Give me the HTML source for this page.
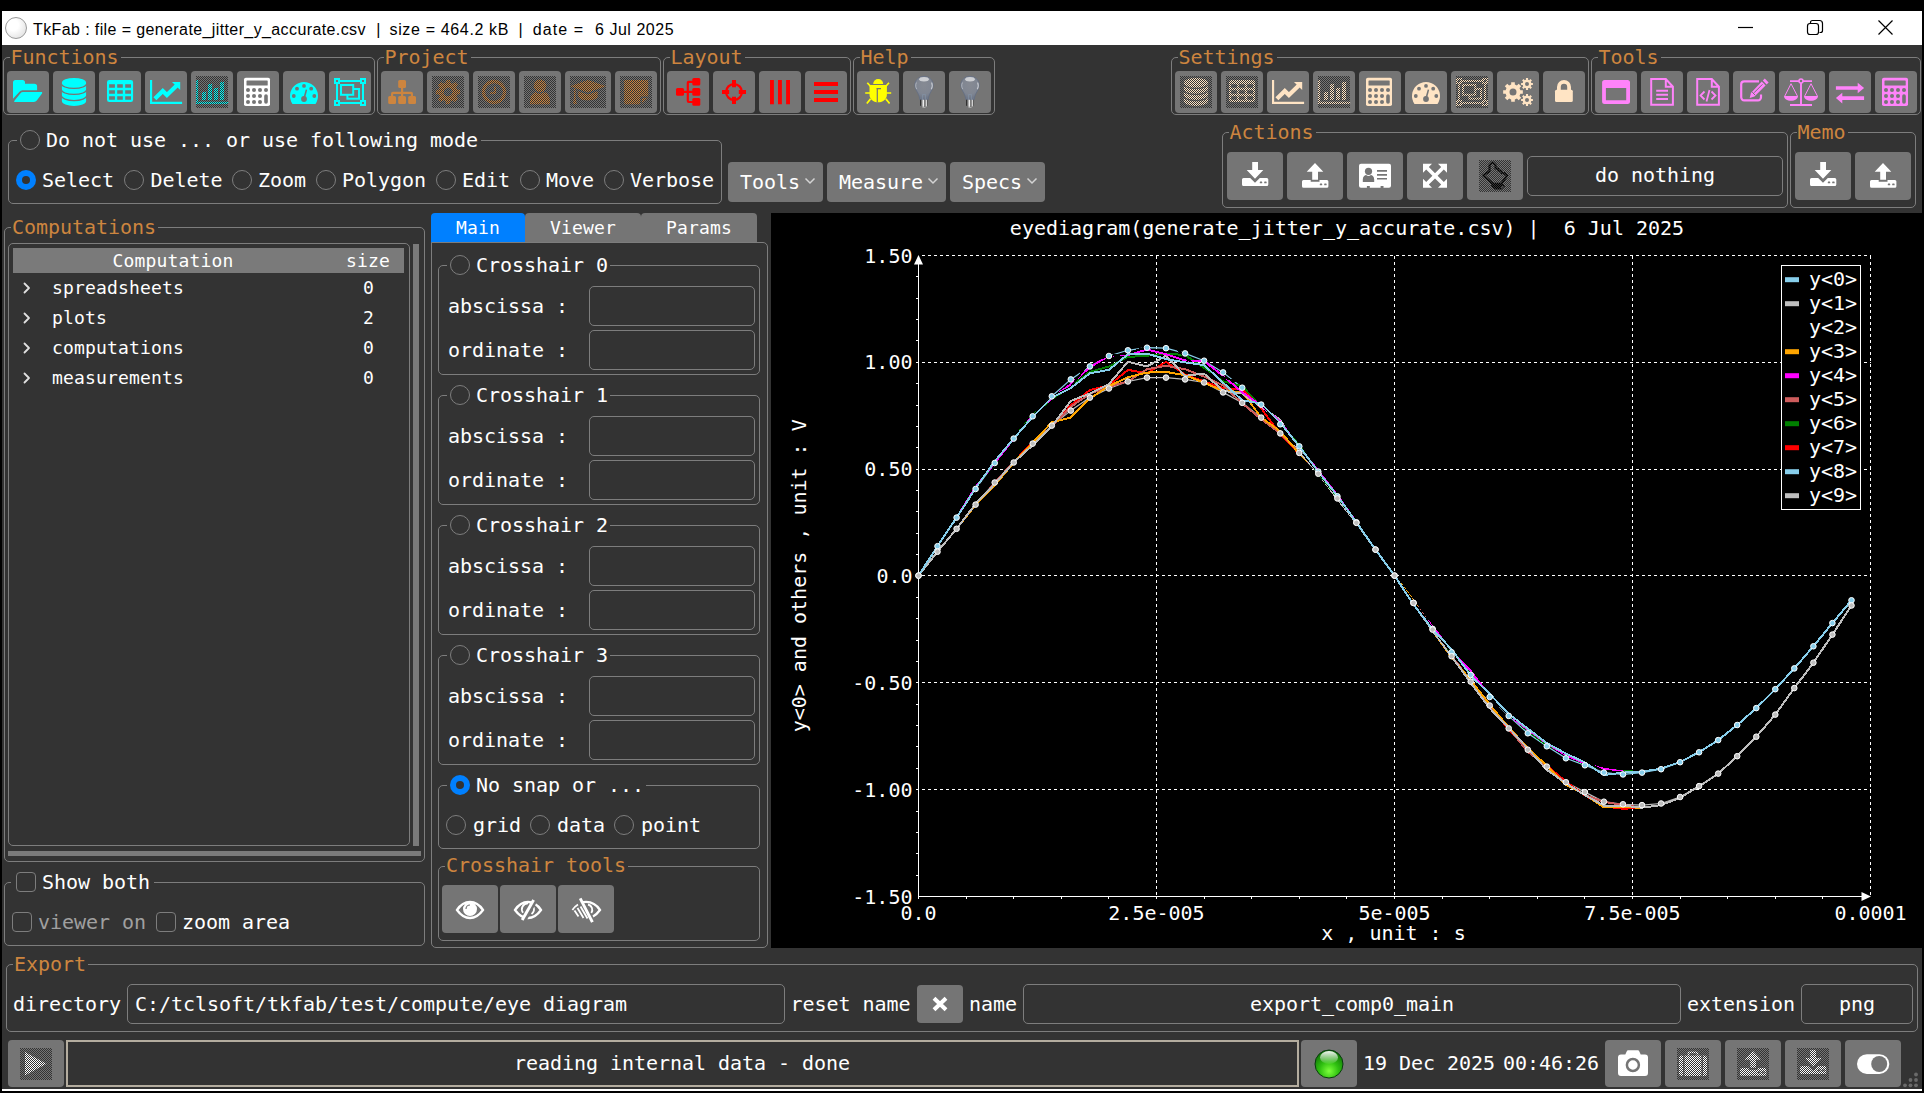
<!DOCTYPE html>
<html lang="en"><head><meta charset="utf-8"><title>TkFab</title>
<style>
html,body{margin:0;padding:0;background:#000;}
#root{position:relative;width:1924px;height:1093px;overflow:hidden;font-family:"DejaVu Sans Mono","Liberation Mono",monospace;}
.p,.t,.f,.b,.st{position:absolute;}
.t{white-space:pre;}
.f{box-sizing:border-box;border:1px solid #7d7d7d;border-radius:5px;}
.b{background:#757575;overflow:hidden;}
.st{background:repeating-conic-gradient(transparent 0 25%,#333333 0 50%) 0 0/2px 2px;}
.ttl{font-family:"Liberation Sans","DejaVu Sans",sans-serif;font-size:16px;line-height:22px;color:#000;white-space:pre;letter-spacing:0.5px}
svg{display:block;overflow:visible}
</style></head>
<body><div id="root">
<div class="p" style="left:0;top:0;width:1924px;height:1093px;background:#000"></div>
<div class="p" style="left:2px;top:11px;width:1920px;height:1080px;background:#fff"></div>
<div class="p" style="left:2px;top:45px;width:1920px;height:1044px;background:#333333"></div>
<div class="p" style="left:5px;top:17px;width:22px;height:22px;border-radius:50%;box-sizing:border-box;border:1px solid #9a9a9a;background:radial-gradient(circle at 35% 35%,#fff 30%,#d8d8d8 100%)"></div>
<div class="p ttl" style="left:33px;top:18.5px;letter-spacing:0.39px">TkFab : file = generate_jitter_y_accurate.csv</div>
<div class="p ttl" style="left:376.3px;top:18.5px;letter-spacing:0px">|</div>
<div class="p ttl" style="left:389.5px;top:18.5px;letter-spacing:0.65px">size = 464.2 kB</div>
<div class="p ttl" style="left:518.5px;top:18.5px;letter-spacing:0px">|</div>
<div class="p ttl" style="left:532.7px;top:18.5px;letter-spacing:1.1px">date =</div>
<div class="p ttl" style="left:595px;top:18.5px;letter-spacing:0.53px">6 Jul 2025</div>
<svg class="p" style="left:1730px;top:11px" width="192" height="34" viewBox="0 0 192 34"><g fill="none" stroke="#000" stroke-width="1.2"><path d="M8 16.5h15"/><rect x="77.5" y="12.5" width="11" height="11" rx="2.5"/><path d="M80.5 12.5v-1a2 2 0 0 1 2-2h7a3 3 0 0 1 3 3v7a2 2 0 0 1-2 2h-1"/><path d="M148.5 9.5l14 14m0-14l-14 14"/></g></svg>
<div class="b" style="left:7px;top:71px;width:42px;height:42px;border-radius:4px"><svg class="p" style="left:5.0px;top:5.0px" width="32" height="32" viewBox="0 0 32 32"><g fill="#00ffff"><path d="M1 6.400a2.500 2.500 0 0 1 2.500-2.500h7a2.500 2.500 0 0 1 2.500 2.500v1.400h9.300a2.800 2.800 0 0 1 2.800 2.800v3.700H10.400a3.600 3.600 0 0 0-2.900 1.500L1 22.800z"/><path d="M11.300 16h18c.9 0 1.200.7.700 1.400l-5.200 7.200a3.600 3.600 0 0 1-2.900 1.500H3.100c-.9 0-1.200-.7-.7-1.400l5.900-7.300a3.600 3.600 0 0 1 3-1.400z"/></g></svg></div>
<div class="b" style="left:53px;top:71px;width:42px;height:42px;border-radius:4px"><svg class="p" style="left:5.0px;top:5.0px" width="32" height="32" viewBox="0 0 32 32"><g fill="#00ffff"><path d="M3.9 6.9h24.2v18.100h-24.2z"/><ellipse cx="16" cy="6.9" rx="12.100" ry="5"/><ellipse cx="16" cy="25" rx="12.100" ry="5"/></g><g fill="none" stroke="#757575" stroke-width="1.25"><path d="M3.3 7.500A12.7 5 0 0 0 28.700 7.500M3.3 13.45A12.7 5 0 0 0 28.700 13.45M3.3 19.55A12.7 5 0 0 0 28.700 19.55"/></g></svg></div>
<div class="b" style="left:99px;top:71px;width:42px;height:42px;border-radius:4px"><svg class="p" style="left:5.0px;top:5.0px" width="32" height="32" viewBox="0 0 32 32"><path fill="#00ffff" fill-rule="evenodd" d="M5.300 3.900h21.5a2.3 2.3 0 0 1 2.3 2.3v17.600a2.3 2.3 0 0 1-2.3 2.3H5.300a2.3 2.3 0 0 1-2.3-2.3V6.200a2.3 2.3 0 0 1 2.3-2.3z M5.15 8.2h5.75v3.6h-5.75z M13.2 8.2h5.6v3.6h-5.6z M21.2 8.2h5.8v3.6h-5.8z M5.15 14.2h5.75v3.5h-5.75z M13.2 14.2h5.6v3.5h-5.6z M21.2 14.2h5.8v3.5h-5.8z M5.15 20.2h5.75v3.6h-5.75z M13.2 20.2h5.6v3.6h-5.6z M21.2 20.2h5.8v3.6h-5.8z"/></svg></div>
<div class="b" style="left:145px;top:71px;width:42px;height:42px;border-radius:4px"><svg class="p" style="left:5.0px;top:5.0px" width="32" height="32" viewBox="0 0 32 32"><g fill="#00ffff"><path d="M0 3.900h2.150v21.800H32.100v2.200H0z"/><path d="M21.950 6H30.200V14z"/></g><path d="M4.900 22.850L12.800 15l4.100 4L26.500 9.700" fill="none" stroke="#00ffff" stroke-width="4.200"/></svg></div>
<div class="b" style="left:191px;top:71px;width:42px;height:42px;border-radius:4px"><svg class="p" style="left:5.0px;top:5.0px" width="32" height="32" viewBox="0 0 32 32"><g fill="#00ffff"><path d="M0 3.900h2.150v21.800H32.100v2.200H0z"/><path d="M6 16h4v8H6zM12 8h4v16h-4zM18 12h4v12h-4zM24 6h4v18h-4z"/></g></svg><div class="st" style="left:5.0px;top:5.0px;width:32px;height:32px"></div></div>
<div class="b" style="left:237px;top:71px;width:42px;height:42px;border-radius:4px"><svg class="p" style="left:5.0px;top:5.0px" width="32" height="32" viewBox="0 0 32 32"><rect x="2" y="1.800" width="26" height="28.200" rx="1.800" fill="#fff"/><g fill="#757575"><rect x="4.500" y="4.500" width="21.200" height="5" rx=".6"/><circle cx="6" cy="14" r="2"/><circle cx="12" cy="14" r="2"/><circle cx="18" cy="14" r="2"/><circle cx="24" cy="14" r="2"/><circle cx="6" cy="20" r="2"/><circle cx="12" cy="20" r="2"/><circle cx="18" cy="20" r="2"/><circle cx="6" cy="26" r="2"/><circle cx="12" cy="26" r="2"/><circle cx="18" cy="26" r="2"/><rect x="22.200" y="18.200" width="3.600" height="9.600" rx="1.800"/></g></svg></div>
<div class="b" style="left:283px;top:71px;width:42px;height:42px;border-radius:4px"><svg class="p" style="left:5.0px;top:5.0px" width="32" height="32" viewBox="0 0 32 32"><path fill="#00ffff" d="M4.500 28A14 14 0 1 1 27.500 28z"/><g fill="#757575"><circle cx="5.800" cy="20" r="1.900"/><circle cx="9" cy="12.700" r="1.900"/><circle cx="16" cy="9.900" r="1.900"/><circle cx="23.200" cy="12.700" r="1.900"/><circle cx="26.300" cy="20" r="1.900"/><circle cx="16" cy="23" r="2.900"/><path d="M15.200 22.600l2.500-9.200 1.500.4-2.400 9.200z"/></g></svg></div>
<div class="b" style="left:329px;top:71px;width:42px;height:42px;border-radius:4px"><svg class="p" style="left:5.0px;top:5.0px" width="32" height="32" viewBox="0 0 32 32"><g fill="none" stroke="#00ffff" stroke-width="2"><path d="M3 5v22M29 5v22M3 5h26M3 27h26" /><rect x="13.400" y="13" width="11.600" height="9.700"/></g><rect x="7" y="9" width="12.200" height="9.800" fill="#757575" stroke="#00ffff" stroke-width="2"/><g fill="#757575" stroke="#00ffff" stroke-width="2"><rect x="1" y="3" width="4" height="4"/><rect x="27" y="3" width="4" height="4"/><rect x="1" y="25" width="4" height="4"/><rect x="27" y="25" width="4" height="4"/></g></svg></div>
<div class="f" style="left:3px;top:57px;width:372px;height:58px;"></div>
<div class="p" style="left:9.5px;top:48px;width:111.0px;height:22px;background:#333333"></div>
<div class="t" style="top:45.08px;font-size:20px;line-height:24px;color:#cd853f;letter-spacing:-0.040px;left:10.5px;">Functions</div>
<div class="b" style="left:381px;top:71px;width:42px;height:42px;border-radius:4px"><svg class="p" style="left:5.0px;top:5.0px" width="32" height="32" viewBox="0 0 32 32"><g fill="#cd853f"><rect x="12.200" y="4" width="7.800" height="8" rx="1.500"/><rect x="2.200" y="20" width="7.800" height="8" rx="1.500"/><rect x="12.200" y="20" width="7.800" height="8" rx="1.500"/><rect x="22.200" y="20" width="7.800" height="8" rx="1.500"/><path d="M15 11h2.200v4.800H25a2 2 0 0 1 2 2V21h-2.200v-3H17.200v3H15v-3H7.200v3H5v-3.200a2 2 0 0 1 2-2h8z"/></g></svg></div>
<div class="b" style="left:427px;top:71px;width:42px;height:42px;border-radius:4px"><svg class="p" style="left:5.0px;top:5.0px" width="32" height="32" viewBox="0 0 32 32"><g fill="#cd853f"><path fill-rule="evenodd" d="M25.32 13.69 L28.10 13.79 L28.10 18.21 L25.32 18.31 L24.22 20.95 L26.12 22.99 L22.99 26.12 L20.95 24.22 L18.31 25.32 L18.21 28.10 L13.79 28.10 L13.69 25.32 L11.05 24.22 L9.01 26.12 L5.88 22.99 L7.78 20.95 L6.68 18.31 L3.90 18.21 L3.90 13.79 L6.68 13.69 L7.78 11.05 L5.88 9.01 L9.01 5.88 L11.05 7.78 L13.69 6.68 L13.79 3.90 L18.21 3.90 L18.31 6.68 L20.95 7.78 L22.99 5.88 L26.12 9.01 L24.22 11.05Z M20.30 16.00 a4.3 4.3 0 1 0 -8.60 0 a4.3 4.3 0 1 0 8.60 0Z"/></g></svg><div class="st" style="left:5.0px;top:5.0px;width:32px;height:32px"></div></div>
<div class="b" style="left:473px;top:71px;width:42px;height:42px;border-radius:4px"><svg class="p" style="left:5.0px;top:5.0px" width="32" height="32" viewBox="0 0 32 32"><g fill="none" stroke="#cd853f"><circle cx="16" cy="16" r="10.500" stroke-width="3.300"/><path d="M17 10.500v6.500h-4.800" stroke-width="2"/></g></svg><div class="st" style="left:5.0px;top:5.0px;width:32px;height:32px"></div></div>
<div class="b" style="left:519px;top:71px;width:42px;height:42px;border-radius:4px"><svg class="p" style="left:5.0px;top:5.0px" width="32" height="32" viewBox="0 0 32 32"><g fill="#cd853f"><circle cx="16" cy="9.700" r="6.300"/><path d="M6 28.200c-.5-7 2-11.500 6-12.300 1 1 2.500 1.600 4 1.600s3-.6 4-1.600c4 .8 6.500 5.300 6 12.300z"/></g></svg><div class="st" style="left:5.0px;top:5.0px;width:32px;height:32px"></div></div>
<div class="b" style="left:565px;top:71px;width:46px;height:42px;border-radius:4px"><svg class="p" style="left:5.0px;top:5.0px" width="36" height="32" viewBox="0 0 36 32"><g fill="#cd853f"><path d="M18 4L36 10.300 18 16.600 0 10.300z"/><path d="M8.300 15.200L18 18.600l9.700-3.400v5c0 2.300-4.300 4.100-9.700 4.100s-9.700-1.800-9.700-4.100z"/><path d="M4 12.500h1.600v9l1 6.500H3l1-6.500z"/></g></svg><div class="st" style="left:5.0px;top:5.0px;width:36px;height:32px"></div></div>
<div class="b" style="left:615px;top:71px;width:42px;height:42px;border-radius:4px"><svg class="p" style="left:5.0px;top:5.0px" width="32" height="32" viewBox="0 0 32 32"><g fill="#cd853f"><path d="M5.500 4h21.300a1.400 1.400 0 0 1 1.400 1.400V20.500h-6.500a1.400 1.400 0 0 0-1.400 1.400v6.300H5.500a1.400 1.400 0 0 1-1.400-1.400V5.400A1.400 1.400 0 0 1 5.500 4z"/><path d="M22 22h5.800l-5.800 5.800z"/></g></svg><div class="st" style="left:5.0px;top:5.0px;width:32px;height:32px"></div></div>
<div class="f" style="left:377px;top:57px;width:284px;height:58px;"></div>
<div class="p" style="left:383.5px;top:48px;width:87.0px;height:22px;background:#333333"></div>
<div class="t" style="top:45.08px;font-size:20px;line-height:24px;color:#cd853f;letter-spacing:-0.040px;left:384.5px;">Project</div>
<div class="b" style="left:667px;top:71px;width:42px;height:42px;border-radius:4px"><svg class="p" style="left:5.0px;top:5.0px" width="32" height="32" viewBox="0 0 32 32"><g fill="#ff0000"><rect x="4" y="12" width="8" height="7.800" rx="1.500"/><rect x="20.300" y="2" width="8" height="7.600" rx="1.500"/><rect x="20.300" y="12" width="8" height="7.800" rx="1.500"/><rect x="20.300" y="22.100" width="8" height="7.600" rx="1.500"/><path d="M11 14.800h3.700V6.700a2 2 0 0 1 2-2H21v2.200h-4.100v7.900H21V17h-4.100v7.900H21v2.200h-4.300a2 2 0 0 1-2-2V17H11z"/></g></svg></div>
<div class="b" style="left:713px;top:71px;width:42px;height:42px;border-radius:4px"><svg class="p" style="left:5.0px;top:5.0px" width="32" height="32" viewBox="0 0 32 32"><g fill="none" stroke="#ff0000"><circle cx="16" cy="16" r="7.900" stroke-width="2.300"/><path d="M4 16h7.200M20.800 16H28M16 4v7.200M16 20.800V28" stroke-width="4"/></g></svg></div>
<div class="b" style="left:759px;top:71px;width:42px;height:42px;border-radius:4px"><svg class="p" style="left:5.0px;top:5.0px" width="32" height="32" viewBox="0 0 32 32"><path fill="#ff0000" d="M6 4h3.900v24.200H6zM14 4h3.900v24.200H14zM22.100 4H26v24.200h-3.900z"/></svg></div>
<div class="b" style="left:805px;top:71px;width:42px;height:42px;border-radius:4px"><svg class="p" style="left:5.0px;top:5.0px" width="32" height="32" viewBox="0 0 32 32"><path fill="#ff0000" d="M4 6h24v4H4zM4 13.900h24v4.100H4zM4 22h24v4H4z"/></svg></div>
<div class="f" style="left:663px;top:57px;width:188px;height:58px;"></div>
<div class="p" style="left:669.5px;top:48px;width:75.0px;height:22px;background:#333333"></div>
<div class="t" style="top:45.08px;font-size:20px;line-height:24px;color:#cd853f;letter-spacing:-0.040px;left:670.5px;">Layout</div>
<div class="b" style="left:857px;top:71px;width:42px;height:42px;border-radius:4px"><svg class="p" style="left:5.0px;top:5.0px" width="32" height="32" viewBox="0 0 32 32"><g fill="#ffff00"><path d="M11.200 8a5 5 0 0 1 10 0z"/><path d="M7.500 9h17.400v9.500c0 4.500-3.500 7.800-8.700 7.800s-8.700-3.300-8.700-7.800z"/></g><g stroke="#ffff00" stroke-width="1.700" fill="none"><path d="M5.300 6.800l3.800 4.200M3.200 17h5M4.800 27.500l3.800-4.600M27 6.800l-3.800 4.200M29.200 17h-5M27.600 27.500l-3.800-4.600"/></g><path d="M14.700 12h1.200v14.500h-1.200z" fill="#757575"/><path d="M14.700 12h4.300v1.200h-4.300z" fill="#757575"/></svg></div>
<div class="b" style="left:903px;top:71px;width:42px;height:42px;border-radius:4px"><svg class="p" style="left:5.0px;top:5.0px" width="32" height="32" viewBox="0 0 32 32"><defs><radialGradient id="bg1" cx=".5" cy=".35" r=".6"><stop offset="0" stop-color="#868a93"/><stop offset=".7" stop-color="#808692"/><stop offset="1" stop-color="#6f7889"/></radialGradient><linearGradient id="bg2" x1="0" x2="1"><stop offset="0" stop-color="#111"/><stop offset=".45" stop-color="#f4f4f4"/><stop offset=".6" stop-color="#555"/><stop offset=".8" stop-color="#ddd"/><stop offset="1" stop-color="#222"/></linearGradient></defs><path d="M16 0.300c5.200 0 9.200 3.900 9.200 8.800 0 3.500-1.900 5.800-3.200 8.400-1 2-1.600 3.800-1.800 6.200h-8.400c-.2-2.400-.8-4.200-1.800-6.200-1.300-2.600-3.200-4.900-3.200-8.400 0-4.900 4-8.800 9.200-8.800z" fill="url(#bg1)" stroke="#626d84" stroke-width=".7"/><ellipse cx="16" cy="3.200" rx="4.800" ry="2.200" fill="#fff" opacity=".6"/><path d="M23.600 6.500c1.200 2.600.7 5-.3 6.700" stroke="#fff" stroke-width="1.200" fill="none" opacity=".55"/><path d="M8.400 6.500c-1.200 2.600-.7 5 .3 6.700" stroke="#fff" stroke-width="1" fill="none" opacity=".4"/><path d="M14.500 24v-5.500h3V24" stroke="#8393a8" stroke-width=".6" fill="none"/><path d="M12 23.700h8v5.800l-2 1.300h-4l-2-1.300z" fill="url(#bg2)"/><path d="M14 31h4l-1 .8h-2z" fill="#bbb"/></svg></div>
<div class="b" style="left:949px;top:71px;width:42px;height:42px;border-radius:4px"><svg class="p" style="left:5.0px;top:5.0px" width="32" height="32" viewBox="0 0 32 32"><defs><radialGradient id="bg1" cx=".5" cy=".35" r=".6"><stop offset="0" stop-color="#868a93"/><stop offset=".7" stop-color="#808692"/><stop offset="1" stop-color="#6f7889"/></radialGradient><linearGradient id="bg2" x1="0" x2="1"><stop offset="0" stop-color="#111"/><stop offset=".45" stop-color="#f4f4f4"/><stop offset=".6" stop-color="#555"/><stop offset=".8" stop-color="#ddd"/><stop offset="1" stop-color="#222"/></linearGradient></defs><path d="M16 0.300c5.200 0 9.200 3.900 9.200 8.800 0 3.500-1.900 5.800-3.200 8.400-1 2-1.600 3.800-1.800 6.200h-8.400c-.2-2.400-.8-4.200-1.800-6.200-1.300-2.600-3.200-4.900-3.200-8.400 0-4.900 4-8.800 9.200-8.800z" fill="url(#bg1)" stroke="#626d84" stroke-width=".7"/><ellipse cx="16" cy="3.200" rx="4.800" ry="2.200" fill="#fff" opacity=".6"/><path d="M23.600 6.500c1.200 2.600.7 5-.3 6.700" stroke="#fff" stroke-width="1.200" fill="none" opacity=".55"/><path d="M8.400 6.500c-1.200 2.600-.7 5 .3 6.700" stroke="#fff" stroke-width="1" fill="none" opacity=".4"/><path d="M14.500 24v-5.500h3V24" stroke="#8393a8" stroke-width=".6" fill="none"/><path d="M12 23.700h8v5.800l-2 1.300h-4l-2-1.300z" fill="url(#bg2)"/><path d="M14 31h4l-1 .8h-2z" fill="#bbb"/></svg></div>
<div class="f" style="left:853px;top:57px;width:142px;height:58px;"></div>
<div class="p" style="left:859.5px;top:48px;width:51.0px;height:22px;background:#333333"></div>
<div class="t" style="top:45.08px;font-size:20px;line-height:24px;color:#cd853f;letter-spacing:-0.040px;left:860.5px;">Help</div>
<div class="b" style="left:1175px;top:71px;width:42px;height:42px;border-radius:4px"><svg class="p" style="left:5.0px;top:5.0px" width="32" height="32" viewBox="0 0 32 32"><g fill="#ffe4c4"><path d="M3.9 6.9h24.2v18.100h-24.2z"/><ellipse cx="16" cy="6.9" rx="12.100" ry="5"/><ellipse cx="16" cy="25" rx="12.100" ry="5"/></g><g fill="none" stroke="#757575" stroke-width="1.25"><path d="M3.3 7.500A12.7 5 0 0 0 28.700 7.500M3.3 13.45A12.7 5 0 0 0 28.700 13.45M3.3 19.55A12.7 5 0 0 0 28.700 19.55"/></g></svg><div class="st" style="left:5.0px;top:5.0px;width:32px;height:32px"></div></div>
<div class="b" style="left:1221px;top:71px;width:42px;height:42px;border-radius:4px"><svg class="p" style="left:5.0px;top:5.0px" width="32" height="32" viewBox="0 0 32 32"><path fill="#ffe4c4" fill-rule="evenodd" d="M5.300 3.900h21.5a2.3 2.3 0 0 1 2.3 2.3v17.600a2.3 2.3 0 0 1-2.3 2.3H5.300a2.3 2.3 0 0 1-2.3-2.3V6.200a2.3 2.3 0 0 1 2.3-2.3z M5.15 8.2h5.75v3.6h-5.75z M13.2 8.2h5.6v3.6h-5.6z M21.2 8.2h5.8v3.6h-5.8z M5.15 14.2h5.75v3.5h-5.75z M13.2 14.2h5.6v3.5h-5.6z M21.2 14.2h5.8v3.5h-5.8z M5.15 20.2h5.75v3.6h-5.75z M13.2 20.2h5.6v3.6h-5.6z M21.2 20.2h5.8v3.6h-5.8z"/></svg><div class="st" style="left:5.0px;top:5.0px;width:32px;height:32px"></div></div>
<div class="b" style="left:1267px;top:71px;width:42px;height:42px;border-radius:4px"><svg class="p" style="left:5.0px;top:5.0px" width="32" height="32" viewBox="0 0 32 32"><g fill="#ffe4c4"><path d="M0 3.900h2.150v21.800H32.100v2.200H0z"/><path d="M21.950 6H30.200V14z"/></g><path d="M4.900 22.850L12.800 15l4.100 4L26.500 9.700" fill="none" stroke="#ffe4c4" stroke-width="4.200"/></svg></div>
<div class="b" style="left:1313px;top:71px;width:42px;height:42px;border-radius:4px"><svg class="p" style="left:5.0px;top:5.0px" width="32" height="32" viewBox="0 0 32 32"><g fill="#ffe4c4"><path d="M0 3.900h2.150v21.800H32.100v2.200H0z"/><path d="M6 16h4v8H6zM12 8h4v16h-4zM18 12h4v12h-4zM24 6h4v18h-4z"/></g></svg><div class="st" style="left:5.0px;top:5.0px;width:32px;height:32px"></div></div>
<div class="b" style="left:1359px;top:71px;width:42px;height:42px;border-radius:4px"><svg class="p" style="left:5.0px;top:5.0px" width="32" height="32" viewBox="0 0 32 32"><rect x="2" y="1.800" width="26" height="28.200" rx="1.800" fill="#ffe4c4"/><g fill="#757575"><rect x="4.500" y="4.500" width="21.200" height="5" rx=".6"/><circle cx="6" cy="14" r="2"/><circle cx="12" cy="14" r="2"/><circle cx="18" cy="14" r="2"/><circle cx="24" cy="14" r="2"/><circle cx="6" cy="20" r="2"/><circle cx="12" cy="20" r="2"/><circle cx="18" cy="20" r="2"/><circle cx="6" cy="26" r="2"/><circle cx="12" cy="26" r="2"/><circle cx="18" cy="26" r="2"/><rect x="22.200" y="18.200" width="3.600" height="9.600" rx="1.800"/></g></svg></div>
<div class="b" style="left:1405px;top:71px;width:42px;height:42px;border-radius:4px"><svg class="p" style="left:5.0px;top:5.0px" width="32" height="32" viewBox="0 0 32 32"><path fill="#ffe4c4" d="M4.500 28A14 14 0 1 1 27.500 28z"/><g fill="#757575"><circle cx="5.800" cy="20" r="1.900"/><circle cx="9" cy="12.700" r="1.900"/><circle cx="16" cy="9.900" r="1.900"/><circle cx="23.200" cy="12.700" r="1.900"/><circle cx="26.300" cy="20" r="1.900"/><circle cx="16" cy="23" r="2.900"/><path d="M15.200 22.600l2.500-9.200 1.500.4-2.400 9.200z"/></g></svg></div>
<div class="b" style="left:1451px;top:71px;width:42px;height:42px;border-radius:4px"><svg class="p" style="left:5.0px;top:5.0px" width="32" height="32" viewBox="0 0 32 32"><g fill="none" stroke="#ffe4c4" stroke-width="2"><path d="M3 5v22M29 5v22M3 5h26M3 27h26" /><rect x="13.400" y="13" width="11.600" height="9.700"/></g><rect x="7" y="9" width="12.200" height="9.800" fill="#757575" stroke="#ffe4c4" stroke-width="2"/><g fill="#757575" stroke="#ffe4c4" stroke-width="2"><rect x="1" y="3" width="4" height="4"/><rect x="27" y="3" width="4" height="4"/><rect x="1" y="25" width="4" height="4"/><rect x="27" y="25" width="4" height="4"/></g></svg><div class="st" style="left:5.0px;top:5.0px;width:32px;height:32px"></div></div>
<div class="b" style="left:1497px;top:71px;width:42px;height:42px;border-radius:4px"><svg class="p" style="left:5.0px;top:5.0px" width="32" height="32" viewBox="0 0 32 32"><g fill="#ffe4c4"><path fill-rule="evenodd" d="M18.38 14.17 L20.84 14.20 L20.84 17.80 L18.38 17.83 L17.51 19.92 L19.23 21.69 L16.69 24.23 L14.92 22.51 L12.83 23.38 L12.80 25.84 L9.20 25.84 L9.17 23.38 L7.08 22.51 L5.31 24.23 L2.77 21.69 L4.49 19.92 L3.62 17.83 L1.16 17.80 L1.16 14.20 L3.62 14.17 L4.49 12.08 L2.77 10.31 L5.31 7.77 L7.08 9.49 L9.17 8.62 L9.20 6.16 L12.80 6.16 L12.83 8.62 L14.92 9.49 L16.69 7.77 L19.23 10.31 L17.51 12.08Z M14.50 16.00 a3.5 3.5 0 1 0 -7.00 0 a3.5 3.5 0 1 0 7.00 0Z"/><path fill-rule="evenodd" d="M29.27 6.94 L30.90 6.92 L30.90 9.08 L29.27 9.06 L28.77 10.27 L29.94 11.41 L28.41 12.94 L27.27 11.77 L26.06 12.27 L26.08 13.90 L23.92 13.90 L23.94 12.27 L22.73 11.77 L21.59 12.94 L20.06 11.41 L21.23 10.27 L20.73 9.06 L19.10 9.08 L19.10 6.92 L20.73 6.94 L21.23 5.73 L20.06 4.59 L21.59 3.06 L22.73 4.23 L23.94 3.73 L23.92 2.10 L26.08 2.10 L26.06 3.73 L27.27 4.23 L28.41 3.06 L29.94 4.59 L28.77 5.73Z M27.00 8.00 a2 2 0 1 0 -4.00 0 a2 2 0 1 0 4.00 0Z"/><path fill-rule="evenodd" d="M29.27 22.94 L30.90 22.92 L30.90 25.08 L29.27 25.06 L28.77 26.27 L29.94 27.41 L28.41 28.94 L27.27 27.77 L26.06 28.27 L26.08 29.90 L23.92 29.90 L23.94 28.27 L22.73 27.77 L21.59 28.94 L20.06 27.41 L21.23 26.27 L20.73 25.06 L19.10 25.08 L19.10 22.92 L20.73 22.94 L21.23 21.73 L20.06 20.59 L21.59 19.06 L22.73 20.23 L23.94 19.73 L23.92 18.10 L26.08 18.10 L26.06 19.73 L27.27 20.23 L28.41 19.06 L29.94 20.59 L28.77 21.73Z M27.00 24.00 a2 2 0 1 0 -4.00 0 a2 2 0 1 0 4.00 0Z"/></g></svg></div>
<div class="b" style="left:1543px;top:71px;width:42px;height:42px;border-radius:4px"><svg class="p" style="left:5.0px;top:5.0px" width="32" height="32" viewBox="0 0 32 32"><g fill="#ffe4c4"><rect x="7" y="13.800" width="17.800" height="12.300" rx="1.500"/><path d="M9 14V11a7 7 0 0 1 14 0v3h-3.800V11a3.200 3.200 0 0 0-6.400 0v3z"/></g></svg></div>
<div class="f" style="left:1171px;top:57px;width:418px;height:58px;"></div>
<div class="p" style="left:1177.5px;top:48px;width:99.0px;height:22px;background:#333333"></div>
<div class="t" style="top:45.08px;font-size:20px;line-height:24px;color:#cd853f;letter-spacing:-0.040px;left:1178.5px;">Settings</div>
<div class="b" style="left:1595px;top:71px;width:42px;height:42px;border-radius:4px"><svg class="p" style="left:5.0px;top:5.0px" width="32" height="32" viewBox="0 0 32 32"><path fill="#ff83fa" fill-rule="evenodd" d="M4.600 4.100h22.900a2.500 2.500 0 0 1 2.500 2.500v18.800a2.500 2.500 0 0 1-2.500 2.500H4.600a2.500 2.500 0 0 1-2.500-2.500V6.600a2.500 2.500 0 0 1 2.500-2.500z M5.900 12h20.300v12.200H5.900z"/></svg></div>
<div class="b" style="left:1641px;top:71px;width:42px;height:42px;border-radius:4px"><svg class="p" style="left:5.0px;top:5.0px" width="32" height="32" viewBox="0 0 32 32"><path d="M5.200 3h14.600l7.100 7.700V28.700H5.200zM19.800 3v7.700h7.100" fill="none" stroke="#ff83fa" stroke-width="2" stroke-linejoin="miter"/><path d="M10.200 14.800H22M10.200 18.800H22M10.200 22.900H22" stroke="#ff83fa" stroke-width="2" fill="none"/></svg></div>
<div class="b" style="left:1687px;top:71px;width:42px;height:42px;border-radius:4px"><svg class="p" style="left:5.0px;top:5.0px" width="32" height="32" viewBox="0 0 32 32"><path d="M5.200 3h14.600l7.100 7.700V28.700H5.200zM19.800 3v7.700h7.100" fill="none" stroke="#ff83fa" stroke-width="2" stroke-linejoin="miter"/><path d="M12.500 15.500l-4 4 4 4M19.500 15.500l4 4-4 4M17.500 14l-3 11.500" stroke="#ff83fa" stroke-width="1.800" fill="none"/></svg></div>
<div class="b" style="left:1733px;top:71px;width:42px;height:42px;border-radius:4px"><svg class="p" style="left:5.0px;top:5.0px" width="32" height="32" viewBox="0 0 32 32"><path d="M21 5.300H6.200a3 3 0 0 0-3 3v13a3 3 0 0 0 3 3H20a3 3 0 0 0 3-3V18.500" fill="none" stroke="#ff83fa" stroke-width="2.200"/><g fill="#ff83fa"><path d="M24.800 4.600l2-2 3.800 3.800-2 2z"/><path d="M23.800 5.600l3.800 3.800L16.500 20.500l-4.800 1.400 1.200-5z"/></g><path d="M14.200 16.200l3 3M24.500 8.300L16 16.800" stroke="#757575" stroke-width="1" fill="none"/></svg></div>
<div class="b" style="left:1779px;top:71px;width:46px;height:42px;border-radius:4px"><svg class="p" style="left:5.0px;top:5.0px" width="36" height="32" viewBox="0 0 36 32"><g fill="none" stroke="#ff83fa"><path d="M6 5.100h22M17 6.500v22M6 29h22" stroke-width="1.900"/><circle cx="17" cy="5" r="2" stroke-width="1.500" fill="#757575"/><path d="M7 7.700L.8 20M7 7.700L13.400 20M27 7.700L20.700 20M27 7.700L33.400 20" stroke-width="1"/></g><g fill="#ff83fa"><path d="M0 19.900h14c0 2.700-3.100 4.800-7 4.800s-7-2.100-7-4.800zM20 19.900h14c0 2.700-3.100 4.800-7 4.800s-7-2.100-7-4.800z"/></g></svg></div>
<div class="b" style="left:1829px;top:71px;width:42px;height:42px;border-radius:4px"><svg class="p" style="left:5.0px;top:5.0px" width="32" height="32" viewBox="0 0 32 32"><g fill="#ff83fa"><path d="M1.900 10.200h21.800V6.700l6.400 5.300-6.400 5.300v-3.500H1.900z"/><path d="M30.100 20.200H8.300v-3.400L1.900 22.100l6.400 5.400v-3.600h21.800z"/></g></svg></div>
<div class="b" style="left:1875px;top:71px;width:42px;height:42px;border-radius:4px"><svg class="p" style="left:5.0px;top:5.0px" width="32" height="32" viewBox="0 0 32 32"><rect x="2" y="1.800" width="26" height="28.200" rx="1.800" fill="#ff83fa"/><g fill="#757575"><rect x="4.500" y="4.500" width="21.200" height="5" rx=".6"/><circle cx="6" cy="14" r="2"/><circle cx="12" cy="14" r="2"/><circle cx="18" cy="14" r="2"/><circle cx="24" cy="14" r="2"/><circle cx="6" cy="20" r="2"/><circle cx="12" cy="20" r="2"/><circle cx="18" cy="20" r="2"/><circle cx="6" cy="26" r="2"/><circle cx="12" cy="26" r="2"/><circle cx="18" cy="26" r="2"/><rect x="22.200" y="18.200" width="3.600" height="9.600" rx="1.800"/></g></svg></div>
<div class="f" style="left:1591px;top:57px;width:330px;height:58px;"></div>
<div class="p" style="left:1597.5px;top:48px;width:63.0px;height:22px;background:#333333"></div>
<div class="t" style="top:45.08px;font-size:20px;line-height:24px;color:#cd853f;letter-spacing:-0.040px;left:1598.5px;">Tools</div>
<div class="f" style="left:8px;top:140px;width:714px;height:64px;"></div>
<div class="p" style="left:17px;top:128px;width:464px;height:24px;background:#333333"></div>
<div class="p" style="left:20px;top:130px;width:20px;height:20px;border-radius:50%;border:1px solid #7d7d7d;box-sizing:border-box"></div>
<div class="t" style="top:128.08px;font-size:20px;line-height:24px;color:#fff;letter-spacing:-0.040px;left:46px;">Do not use ... or use following mode</div>
<div class="p" style="left:16px;top:170px;width:20px;height:20px;border-radius:50%;background:#0080ff"></div><div class="p" style="left:22px;top:176px;width:8px;height:8px;border-radius:50%;background:#333333"></div>
<div class="t" style="top:168.08px;font-size:20px;line-height:24px;color:#fff;letter-spacing:-0.040px;left:42px;">Select</div>
<div class="p" style="left:124px;top:170px;width:20px;height:20px;border-radius:50%;border:1px solid #7d7d7d;box-sizing:border-box"></div>
<div class="t" style="top:168.08px;font-size:20px;line-height:24px;color:#fff;letter-spacing:-0.040px;left:150.5px;">Delete</div>
<div class="p" style="left:232px;top:170px;width:20px;height:20px;border-radius:50%;border:1px solid #7d7d7d;box-sizing:border-box"></div>
<div class="t" style="top:168.08px;font-size:20px;line-height:24px;color:#fff;letter-spacing:-0.040px;left:258px;">Zoom</div>
<div class="p" style="left:316px;top:170px;width:20px;height:20px;border-radius:50%;border:1px solid #7d7d7d;box-sizing:border-box"></div>
<div class="t" style="top:168.08px;font-size:20px;line-height:24px;color:#fff;letter-spacing:-0.040px;left:342px;">Polygon</div>
<div class="p" style="left:436px;top:170px;width:20px;height:20px;border-radius:50%;border:1px solid #7d7d7d;box-sizing:border-box"></div>
<div class="t" style="top:168.08px;font-size:20px;line-height:24px;color:#fff;letter-spacing:-0.040px;left:462px;">Edit</div>
<div class="p" style="left:520px;top:170px;width:20px;height:20px;border-radius:50%;border:1px solid #7d7d7d;box-sizing:border-box"></div>
<div class="t" style="top:168.08px;font-size:20px;line-height:24px;color:#fff;letter-spacing:-0.040px;left:546px;">Move</div>
<div class="p" style="left:604px;top:170px;width:20px;height:20px;border-radius:50%;border:1px solid #7d7d7d;box-sizing:border-box"></div>
<div class="t" style="top:168.08px;font-size:20px;line-height:24px;color:#fff;letter-spacing:-0.040px;left:630px;">Verbose</div>
<div class="b" style="left:728px;top:162px;width:95px;height:40px;border-radius:4px"><svg class="p" style="left:76px;top:15px" width="12" height="8" viewBox="0 0 12 8"><path d="M1.5 1.5l4.5 4.5 4.5-4.5" fill="none" stroke="#d4d4d4" stroke-width="1.5"/></svg></div>
<div class="t" style="top:170.08px;font-size:20px;line-height:24px;color:#fff;letter-spacing:-0.040px;left:740px;">Tools</div>
<div class="b" style="left:827px;top:162px;width:119px;height:40px;border-radius:4px"><svg class="p" style="left:100px;top:15px" width="12" height="8" viewBox="0 0 12 8"><path d="M1.5 1.5l4.5 4.5 4.5-4.5" fill="none" stroke="#d4d4d4" stroke-width="1.5"/></svg></div>
<div class="t" style="top:170.08px;font-size:20px;line-height:24px;color:#fff;letter-spacing:-0.040px;left:839px;">Measure</div>
<div class="b" style="left:950px;top:162px;width:95px;height:40px;border-radius:4px"><svg class="p" style="left:76px;top:15px" width="12" height="8" viewBox="0 0 12 8"><path d="M1.5 1.5l4.5 4.5 4.5-4.5" fill="none" stroke="#d4d4d4" stroke-width="1.5"/></svg></div>
<div class="t" style="top:170.08px;font-size:20px;line-height:24px;color:#fff;letter-spacing:-0.040px;left:962px;">Specs</div>
<div class="f" style="left:1222px;top:132px;width:566px;height:76px;"></div>
<div class="p" style="left:1228.5px;top:123px;width:87.0px;height:22px;background:#333333"></div>
<div class="t" style="top:120.08px;font-size:20px;line-height:24px;color:#cd853f;letter-spacing:-0.040px;left:1229.5px;">Actions</div>
<div class="b" style="left:1227px;top:152px;width:56px;height:48px;border-radius:4px"><svg class="p" style="left:12.0px;top:8.0px" width="32" height="32" viewBox="0 0 32 32"><g fill="#fff"><path d="M13.200 2h5.800v8.100h5.300L16 18.800 7.700 10.100h5.500z"/><path d="M4.500 18h6.700l4.800 4.800 4.800-4.800h7a1.500 1.500 0 0 1 1.500 1.500v4.900a1.500 1.500 0 0 1-1.500 1.500H4.500A1.500 1.500 0 0 1 3 24.400v-4.900A1.500 1.500 0 0 1 4.500 18z"/></g><g fill="#757575"><rect x="20.800" y="21.600" width="2.400" height="1.700" rx=".4"/><rect x="25.200" y="21.600" width="2.400" height="1.700" rx=".4"/></g></svg></div>
<div class="b" style="left:1287px;top:152px;width:56px;height:48px;border-radius:4px"><svg class="p" style="left:12.0px;top:8.0px" width="32" height="32" viewBox="0 0 32 32"><g fill="#fff"><path d="M16 3l8.300 8.700H19v8h-5.800v-8H7.700z"/><path d="M4.500 20h7.200v1.700h8.800V20h7.400a1.500 1.500 0 0 1 1.500 1.500v4.800a1.500 1.500 0 0 1-1.500 1.500H4.500A1.500 1.500 0 0 1 3 26.300v-4.800A1.500 1.500 0 0 1 4.500 20z"/></g><g fill="#757575"><rect x="20.800" y="23.600" width="2.400" height="1.700" rx=".4"/><rect x="25.200" y="23.600" width="2.400" height="1.700" rx=".4"/></g></svg></div>
<div class="b" style="left:1347px;top:152px;width:56px;height:48px;border-radius:4px"><svg class="p" style="left:12.0px;top:8.0px" width="32" height="32" viewBox="0 0 32 32"><path fill="#fff" d="M2 3.800h28a2 2 0 0 1 2 2v20a2 2 0 0 1-2 2h-5.500v-1.900h-2.900v1.900H10.800v-1.900H7.900v1.900H2a2 2 0 0 1-2-2v-20a2 2 0 0 1 2-2z"/><g fill="#757575"><circle cx="9.500" cy="11.300" r="3.600"/><path d="M3.800 22v-2.500c0-3 2-4.500 3.300-4.500.7.600 1.500.9 2.400.9s1.700-.3 2.400-.9c1.300 0 3.300 1.500 3.300 4.500V22z"/><path d="M18 10.100h10v1.600H18zM18 14.100h10v1.600H18zM18 18h10v1.600H18z"/></g></svg></div>
<div class="b" style="left:1407px;top:152px;width:56px;height:48px;border-radius:4px"><svg class="p" style="left:12.0px;top:8.0px" width="32" height="32" viewBox="0 0 32 32"><g fill="#fff"><path d="M4 3.800h9l-3.200 3.200 6.200 6.200 6.200-6.200L19 3.800h9v9l-3.200-3.200-6.200 6.200 6.200 6.200 3.200-3.200v9h-9l3.200-3.200-6.200-6.200-6.200 6.200 3.200 3.200H4v-9l3.200 3.200 6.200-6.200-6.200-6.200L4 12.800z"/></g></svg></div>
<div class="b" style="left:1467px;top:152px;width:56px;height:48px;border-radius:4px"><svg class="p" style="left:12.0px;top:8.0px" width="32" height="32" viewBox="0 0 32 32"><path d="M13.500 2.200L10.500 5.300V11.200L4.200 15.400 13.400 23.300M13.500 2.200L16.600 5.300V8.300l2.600.4.400 2 2.600.2.500 2 2.500.3 3 2.200L21.800 24.500" fill="none" stroke="#000" stroke-width="2.300" stroke-linejoin="round"/><path d="M13 22.800h9.500l3.500 3.500-3.300 3.300H16l-4-3.600z" fill="#000"/><rect x="22.300" y="26.300" width="2" height="2" fill="#757575"/></svg><div class="st" style="left:12.0px;top:8.0px;width:32px;height:32px"></div></div>
<div class="f" style="left:1527px;top:156px;width:256px;height:40px;"></div>
<div class="t" style="top:163.08px;font-size:20px;line-height:24px;color:#fff;letter-spacing:-0.040px;left:1155px;width:1000px;text-align:center;">do nothing</div>
<div class="f" style="left:1790px;top:132px;width:126px;height:76px;"></div>
<div class="p" style="left:1796.5px;top:123px;width:51.0px;height:22px;background:#333333"></div>
<div class="t" style="top:120.08px;font-size:20px;line-height:24px;color:#cd853f;letter-spacing:-0.040px;left:1797.5px;">Memo</div>
<div class="b" style="left:1795px;top:152px;width:56px;height:48px;border-radius:4px"><svg class="p" style="left:12.0px;top:8.0px" width="32" height="32" viewBox="0 0 32 32"><g fill="#fff"><path d="M13.200 2h5.800v8.100h5.300L16 18.800 7.700 10.100h5.500z"/><path d="M4.500 18h6.700l4.800 4.800 4.800-4.800h7a1.500 1.500 0 0 1 1.500 1.500v4.900a1.500 1.500 0 0 1-1.500 1.500H4.500A1.500 1.500 0 0 1 3 24.400v-4.900A1.500 1.500 0 0 1 4.500 18z"/></g><g fill="#757575"><rect x="20.800" y="21.600" width="2.400" height="1.700" rx=".4"/><rect x="25.200" y="21.600" width="2.400" height="1.700" rx=".4"/></g></svg></div>
<div class="b" style="left:1855px;top:152px;width:56px;height:48px;border-radius:4px"><svg class="p" style="left:12.0px;top:8.0px" width="32" height="32" viewBox="0 0 32 32"><g fill="#fff"><path d="M16 3l8.300 8.700H19v8h-5.800v-8H7.700z"/><path d="M4.500 20h7.200v1.700h8.800V20h7.400a1.500 1.500 0 0 1 1.500 1.500v4.800a1.500 1.500 0 0 1-1.500 1.500H4.500A1.500 1.500 0 0 1 3 26.300v-4.800A1.500 1.500 0 0 1 4.500 20z"/></g><g fill="#757575"><rect x="20.800" y="23.600" width="2.400" height="1.700" rx=".4"/><rect x="25.200" y="23.600" width="2.400" height="1.700" rx=".4"/></g></svg></div>
<div class="f" style="left:4px;top:227px;width:421px;height:635px;"></div>
<div class="p" style="left:11px;top:218px;width:147.0px;height:22px;background:#333333"></div>
<div class="t" style="top:215.08px;font-size:20px;line-height:24px;color:#cd853f;letter-spacing:-0.040px;left:12px;">Computations</div>
<div class="f" style="left:8px;top:243px;width:402px;height:603px;"></div>
<div class="p" style="left:13px;top:248px;width:391px;height:25px;background:#7a7a7a"></div>
<div class="t" style="top:248.77px;font-size:18px;line-height:24px;color:#fff;letter-spacing:0.164px;left:-327px;width:1000px;text-align:center;">Computation</div>
<div class="t" style="top:248.77px;font-size:18px;line-height:24px;color:#fff;letter-spacing:0.164px;left:-132px;width:1000px;text-align:center;">size</div>
<div class="t" style="top:275.77px;font-size:18px;line-height:24px;color:#fff;letter-spacing:0.164px;left:52px;">spreadsheets</div>
<div class="t" style="top:275.77px;font-size:18px;line-height:24px;color:#fff;letter-spacing:0.164px;left:-131.5px;width:1000px;text-align:center;">0</div>
<svg class="p" style="left:22px;top:281px" width="10" height="14" viewBox="0 0 10 14"><path d="M2.5 2.5l4.5 4.5-4.5 4.5" fill="none" stroke="#e0e0e0" stroke-width="1.8" stroke-linecap="round" stroke-linejoin="round"/></svg>
<div class="t" style="top:305.77px;font-size:18px;line-height:24px;color:#fff;letter-spacing:0.164px;left:52px;">plots</div>
<div class="t" style="top:305.77px;font-size:18px;line-height:24px;color:#fff;letter-spacing:0.164px;left:-131.5px;width:1000px;text-align:center;">2</div>
<svg class="p" style="left:22px;top:311px" width="10" height="14" viewBox="0 0 10 14"><path d="M2.5 2.5l4.5 4.5-4.5 4.5" fill="none" stroke="#e0e0e0" stroke-width="1.8" stroke-linecap="round" stroke-linejoin="round"/></svg>
<div class="t" style="top:335.77px;font-size:18px;line-height:24px;color:#fff;letter-spacing:0.164px;left:52px;">computations</div>
<div class="t" style="top:335.77px;font-size:18px;line-height:24px;color:#fff;letter-spacing:0.164px;left:-131.5px;width:1000px;text-align:center;">0</div>
<svg class="p" style="left:22px;top:341px" width="10" height="14" viewBox="0 0 10 14"><path d="M2.5 2.5l4.5 4.5-4.5 4.5" fill="none" stroke="#e0e0e0" stroke-width="1.8" stroke-linecap="round" stroke-linejoin="round"/></svg>
<div class="t" style="top:365.77px;font-size:18px;line-height:24px;color:#fff;letter-spacing:0.164px;left:52px;">measurements</div>
<div class="t" style="top:365.77px;font-size:18px;line-height:24px;color:#fff;letter-spacing:0.164px;left:-131.5px;width:1000px;text-align:center;">0</div>
<svg class="p" style="left:22px;top:371px" width="10" height="14" viewBox="0 0 10 14"><path d="M2.5 2.5l4.5 4.5-4.5 4.5" fill="none" stroke="#e0e0e0" stroke-width="1.8" stroke-linecap="round" stroke-linejoin="round"/></svg>
<div class="p" style="left:413px;top:244px;width:6px;height:602px;background:#7a7a7a"></div>
<div class="p" style="left:8px;top:851px;width:413px;height:5px;background:#7a7a7a"></div>
<div class="f" style="left:4px;top:882px;width:421px;height:64px;"></div>
<div class="p" style="left:11px;top:870px;width:143px;height:24px;background:#333333"></div>
<div class="p" style="left:16px;top:872px;width:20px;height:20px;border-radius:4px;border:1px solid #7d7d7d;box-sizing:border-box"></div>
<div class="t" style="top:870.08px;font-size:20px;line-height:24px;color:#fff;letter-spacing:-0.040px;left:42px;">Show both</div>
<div class="p" style="left:12px;top:912px;width:20px;height:20px;border-radius:4px;border:1px solid #7d7d7d;box-sizing:border-box"></div>
<div class="t" style="top:910.08px;font-size:20px;line-height:24px;color:#a0a0a0;letter-spacing:-0.040px;left:38px;">viewer on</div>
<div class="p" style="left:156px;top:912px;width:20px;height:20px;border-radius:4px;border:1px solid #7d7d7d;box-sizing:border-box"></div>
<div class="t" style="top:910.08px;font-size:20px;line-height:24px;color:#fff;letter-spacing:-0.040px;left:182px;">zoom area</div>
<div class="p" style="left:431px;top:213px;width:94px;height:30px;background:#0080ff;border-radius:4px 4px 0 0"></div>
<div class="p" style="left:525px;top:213px;width:116px;height:30px;background:#757575;border-radius:4px 4px 0 0"></div>
<div class="p" style="left:641px;top:213px;width:116px;height:30px;background:#757575;border-radius:4px 4px 0 0"></div>
<div class="t" style="top:215.77px;font-size:18px;line-height:24px;color:#fff;letter-spacing:0.164px;left:-22px;width:1000px;text-align:center;">Main</div>
<div class="t" style="top:215.77px;font-size:18px;line-height:24px;color:#fff;letter-spacing:0.164px;left:83px;width:1000px;text-align:center;">Viewer</div>
<div class="t" style="top:215.77px;font-size:18px;line-height:24px;color:#fff;letter-spacing:0.164px;left:199px;width:1000px;text-align:center;">Params</div>
<div class="f" style="left:431px;top:242px;width:337px;height:706px;border-radius:0 5px 5px 5px"></div>
<div class="f" style="left:438px;top:265px;width:322px;height:110px;"></div>
<div class="p" style="left:447px;top:253px;width:163px;height:24px;background:#333333"></div>
<div class="p" style="left:450px;top:255px;width:20px;height:20px;border-radius:50%;border:1px solid #7d7d7d;box-sizing:border-box"></div>
<div class="t" style="top:253.08px;font-size:20px;line-height:24px;color:#fff;letter-spacing:-0.040px;left:476px;">Crosshair 0</div>
<div class="t" style="top:294.08px;font-size:20px;line-height:24px;color:#fff;letter-spacing:-0.040px;left:448px;">abscissa :</div>
<div class="f" style="left:589px;top:286px;width:166px;height:40px;"></div>
<div class="t" style="top:338.08px;font-size:20px;line-height:24px;color:#fff;letter-spacing:-0.040px;left:448px;">ordinate :</div>
<div class="f" style="left:589px;top:330px;width:166px;height:40px;"></div>
<div class="f" style="left:438px;top:395px;width:322px;height:110px;"></div>
<div class="p" style="left:447px;top:383px;width:163px;height:24px;background:#333333"></div>
<div class="p" style="left:450px;top:385px;width:20px;height:20px;border-radius:50%;border:1px solid #7d7d7d;box-sizing:border-box"></div>
<div class="t" style="top:383.08px;font-size:20px;line-height:24px;color:#fff;letter-spacing:-0.040px;left:476px;">Crosshair 1</div>
<div class="t" style="top:424.08px;font-size:20px;line-height:24px;color:#fff;letter-spacing:-0.040px;left:448px;">abscissa :</div>
<div class="f" style="left:589px;top:416px;width:166px;height:40px;"></div>
<div class="t" style="top:468.08px;font-size:20px;line-height:24px;color:#fff;letter-spacing:-0.040px;left:448px;">ordinate :</div>
<div class="f" style="left:589px;top:460px;width:166px;height:40px;"></div>
<div class="f" style="left:438px;top:525px;width:322px;height:110px;"></div>
<div class="p" style="left:447px;top:513px;width:163px;height:24px;background:#333333"></div>
<div class="p" style="left:450px;top:515px;width:20px;height:20px;border-radius:50%;border:1px solid #7d7d7d;box-sizing:border-box"></div>
<div class="t" style="top:513.08px;font-size:20px;line-height:24px;color:#fff;letter-spacing:-0.040px;left:476px;">Crosshair 2</div>
<div class="t" style="top:554.08px;font-size:20px;line-height:24px;color:#fff;letter-spacing:-0.040px;left:448px;">abscissa :</div>
<div class="f" style="left:589px;top:546px;width:166px;height:40px;"></div>
<div class="t" style="top:598.08px;font-size:20px;line-height:24px;color:#fff;letter-spacing:-0.040px;left:448px;">ordinate :</div>
<div class="f" style="left:589px;top:590px;width:166px;height:40px;"></div>
<div class="f" style="left:438px;top:655px;width:322px;height:110px;"></div>
<div class="p" style="left:447px;top:643px;width:163px;height:24px;background:#333333"></div>
<div class="p" style="left:450px;top:645px;width:20px;height:20px;border-radius:50%;border:1px solid #7d7d7d;box-sizing:border-box"></div>
<div class="t" style="top:643.08px;font-size:20px;line-height:24px;color:#fff;letter-spacing:-0.040px;left:476px;">Crosshair 3</div>
<div class="t" style="top:684.08px;font-size:20px;line-height:24px;color:#fff;letter-spacing:-0.040px;left:448px;">abscissa :</div>
<div class="f" style="left:589px;top:676px;width:166px;height:40px;"></div>
<div class="t" style="top:728.08px;font-size:20px;line-height:24px;color:#fff;letter-spacing:-0.040px;left:448px;">ordinate :</div>
<div class="f" style="left:589px;top:720px;width:166px;height:40px;"></div>
<div class="f" style="left:438px;top:785px;width:322px;height:64px;"></div>
<div class="p" style="left:447px;top:773px;width:199px;height:24px;background:#333333"></div>
<div class="p" style="left:450px;top:775px;width:20px;height:20px;border-radius:50%;background:#0080ff"></div><div class="p" style="left:456px;top:781px;width:8px;height:8px;border-radius:50%;background:#333333"></div>
<div class="t" style="top:773.08px;font-size:20px;line-height:24px;color:#fff;letter-spacing:-0.040px;left:476px;">No snap or ...</div>
<div class="p" style="left:446px;top:815px;width:20px;height:20px;border-radius:50%;border:1px solid #7d7d7d;box-sizing:border-box"></div>
<div class="t" style="top:813.08px;font-size:20px;line-height:24px;color:#fff;letter-spacing:-0.040px;left:473px;">grid</div>
<div class="p" style="left:530px;top:815px;width:20px;height:20px;border-radius:50%;border:1px solid #7d7d7d;box-sizing:border-box"></div>
<div class="t" style="top:813.08px;font-size:20px;line-height:24px;color:#fff;letter-spacing:-0.040px;left:557px;">data</div>
<div class="p" style="left:614px;top:815px;width:20px;height:20px;border-radius:50%;border:1px solid #7d7d7d;box-sizing:border-box"></div>
<div class="t" style="top:813.08px;font-size:20px;line-height:24px;color:#fff;letter-spacing:-0.040px;left:641px;">point</div>
<div class="f" style="left:438px;top:866px;width:322px;height:75px;"></div>
<div class="p" style="left:445px;top:856px;width:183.0px;height:22px;background:#333333"></div>
<div class="t" style="top:853.08px;font-size:20px;line-height:24px;color:#cd853f;letter-spacing:-0.040px;left:446px;">Crosshair tools</div>
<div class="b" style="left:442px;top:885px;width:56px;height:48px;border-radius:4px"><svg class="p" style="left:12.0px;top:8.0px" width="32" height="32" viewBox="0 0 32 32"><path d="M3 17C6.800 11.300 11 9 16 9s9.200 2.300 13 8c-3.800 5.300-8 8-13 8S6.800 22.300 3 17z" fill="none" stroke="#fff" stroke-width="2.300"/><circle cx="16" cy="16.100" r="7" fill="#fff"/><path d="M12 16a4 4 0 0 1 4-4" stroke="#757575" stroke-width="1.200" fill="none"/></svg></div>
<div class="b" style="left:500px;top:885px;width:56px;height:48px;border-radius:4px"><svg class="p" style="left:12.0px;top:8.0px" width="32" height="32" viewBox="0 0 32 32"><path d="M3 17C6.800 11.300 11 9 16 9s9.200 2.300 13 8c-3.800 5.300-8 8-13 8S6.800 22.300 3 17z" fill="none" stroke="#fff" stroke-width="2.300"/><path d="M16 10.300a6 6 0 0 0-5 9.500M19.500 21a6 6 0 0 0 2-7" stroke="#fff" stroke-width="1.800" fill="none"/><path d="M24 6.800L12.800 27.200" stroke="#757575" stroke-width="3.600"/><path d="M21.600 7L10.200 27" stroke="#fff" stroke-width="2.900"/></svg></div>
<div class="b" style="left:558px;top:885px;width:56px;height:48px;border-radius:4px"><svg class="p" style="left:12.0px;top:8.0px" width="32" height="32" viewBox="0 0 32 32"><path d="M13 9.200C20.500 8 26 11 30 17c-2.200 3-4.500 5.100-7 6.400" fill="none" stroke="#fff" stroke-width="2.300"/><path d="M18 11.500a5.500 5.500 0 0 1 3.300 8.500" stroke="#fff" stroke-width="1.800" fill="none"/><path d="M8 11.500C5.500 13 3.800 14.800 2.400 17M4.500 17.500l4 6M7.500 15l6 10M10.500 13.500l7 12" stroke="#fff" stroke-width="1.800" fill="none"/><path d="M10.200 5.300L22.400 29.200" stroke="#fff" stroke-width="2.900" fill="none"/></svg></div>
<div class="f" style="left:6px;top:964px;width:1912px;height:68px;"></div>
<div class="p" style="left:13px;top:955px;width:75.0px;height:22px;background:#333333"></div>
<div class="t" style="top:952.08px;font-size:20px;line-height:24px;color:#cd853f;letter-spacing:-0.040px;left:14px;">Export</div>
<div class="t" style="top:992.08px;font-size:20px;line-height:24px;color:#fff;letter-spacing:-0.040px;left:13px;">directory</div>
<div class="f" style="left:127px;top:984px;width:658px;height:40px;"></div>
<div class="t" style="top:992.08px;font-size:20px;line-height:24px;color:#fff;letter-spacing:-0.040px;left:135px;">C:/tclsoft/tkfab/test/compute/eye diagram</div>
<div class="t" style="top:992.08px;font-size:20px;line-height:24px;color:#fff;letter-spacing:-0.040px;left:790.5px;">reset name</div>
<div class="b" style="left:917px;top:985px;width:46px;height:38px;border-radius:4px"><svg class="p" style="left:15.0px;top:11.0px" width="16" height="16" viewBox="0 0 16 16"><path d="M2 2.200l12 11.600M14 2.200L2 13.800" stroke="#fff" stroke-width="4" fill="none" transform="translate(0,0)"/></svg></div>
<div class="t" style="top:992.08px;font-size:20px;line-height:24px;color:#fff;letter-spacing:-0.040px;left:969px;">name</div>
<div class="f" style="left:1023px;top:984px;width:658px;height:40px;"></div>
<div class="t" style="top:992.08px;font-size:20px;line-height:24px;color:#fff;letter-spacing:-0.040px;left:852px;width:1000px;text-align:center;">export_comp0_main</div>
<div class="t" style="top:992.08px;font-size:20px;line-height:24px;color:#fff;letter-spacing:-0.040px;left:1687px;">extension</div>
<div class="f" style="left:1801px;top:984px;width:112px;height:40px;"></div>
<div class="t" style="top:992.08px;font-size:20px;line-height:24px;color:#fff;letter-spacing:-0.040px;left:1357px;width:1000px;text-align:center;">png</div>
<div class="b" style="left:8px;top:1040px;width:56px;height:47px;border-radius:4px"><svg class="p" style="left:12.0px;top:7.5px" width="32" height="32" viewBox="0 0 32 32"><path d="M5 4L26.500 15.800 5 27.600z" fill="#fff"/></svg><div class="st" style="left:12.0px;top:7.5px;width:32px;height:32px"></div></div>
<div class="p" style="left:66px;top:1040px;width:1233px;height:47px;box-sizing:border-box;border:2px solid #b4ad9f;"></div>
<div class="t" style="top:1051.08px;font-size:20px;line-height:24px;color:#fff;letter-spacing:-0.040px;left:182px;width:1000px;text-align:center;">reading internal data - done</div>
<div class="b" style="left:1301px;top:1040px;width:56px;height:47px;border-radius:4px"><svg class="p" style="left:12.0px;top:7.5px" width="32" height="32" viewBox="0 0 32 32"><defs><radialGradient id="lg1" cx=".5" cy=".75" r=".75"><stop offset="0" stop-color="#7dff3c"/><stop offset=".45" stop-color="#2fc010"/><stop offset="1" stop-color="#0c6a06"/></radialGradient><linearGradient id="lg2" x1="0" y1="0" x2="0" y2="1"><stop offset="0" stop-color="#fff" stop-opacity=".95"/><stop offset="1" stop-color="#fff" stop-opacity=".05"/></linearGradient></defs><circle cx="16" cy="16" r="14" fill="url(#lg1)" stroke="#0a3a10" stroke-width="1"/><ellipse cx="16" cy="9.500" rx="9" ry="6.500" fill="url(#lg2)"/></svg></div>
<div class="t" style="top:1051.08px;font-size:20px;line-height:24px;color:#fff;letter-spacing:-0.040px;left:1363px;">19 Dec 2025</div>
<div class="t" style="top:1051.08px;font-size:20px;line-height:24px;color:#fff;letter-spacing:-0.040px;left:1503px;">00:46:26</div>
<div class="b" style="left:1605px;top:1040px;width:56px;height:47px;border-radius:4px"><svg class="p" style="left:12.0px;top:7.5px" width="32" height="32" viewBox="0 0 32 32"><path fill="#fff" d="M4 6.500h4.300l1.500-3.200a1.500 1.500 0 0 1 1.300-1h9.800a1.500 1.500 0 0 1 1.300 1l1.500 3.200H28a3 3 0 0 1 3 3V25a3 3 0 0 1-3 3H4a3 3 0 0 1-3-3V9.500a3 3 0 0 1 3-3z"/><circle cx="15.900" cy="17" r="6" fill="none" stroke="#757575" stroke-width="2.500"/></svg></div>
<div class="b" style="left:1665px;top:1040px;width:56px;height:47px;border-radius:4px"><svg class="p" style="left:12.0px;top:7.5px" width="32" height="32" viewBox="0 0 32 32"><g fill="#fff"><path d="M4.500 7.400H6v20.600H4.500A2.500 2.500 0 0 1 2 25.500V9.900a2.500 2.500 0 0 1 2.500-2.500zM7.500 7.400h17V28h-17zM26 7.400h1.500A2.500 2.500 0 0 1 30 9.900v15.600a2.500 2.500 0 0 1-2.500 2.500H26z"/></g><path d="M11.500 7.400V5.500a1.200 1.200 0 0 1 1.200-1.200h6.600a1.200 1.200 0 0 1 1.200 1.200v1.900" fill="none" stroke="#fff" stroke-width="1.800"/></svg><div class="st" style="left:12.0px;top:7.5px;width:32px;height:32px"></div></div>
<div class="b" style="left:1725px;top:1040px;width:56px;height:47px;border-radius:4px"><svg class="p" style="left:12.0px;top:7.5px" width="32" height="32" viewBox="0 0 32 32"><g fill="#fff"><path d="M16 3l8.300 8.700H19v8h-5.800v-8H7.700z"/><path d="M4.500 20h7.200v1.700h8.800V20h7.400a1.500 1.500 0 0 1 1.500 1.500v4.800a1.500 1.500 0 0 1-1.500 1.500H4.500A1.500 1.500 0 0 1 3 26.300v-4.800A1.500 1.500 0 0 1 4.500 20z"/></g><g fill="#757575"><rect x="20.800" y="23.600" width="2.400" height="1.700" rx=".4"/><rect x="25.200" y="23.600" width="2.400" height="1.700" rx=".4"/></g></svg><div class="st" style="left:12.0px;top:7.5px;width:32px;height:32px"></div></div>
<div class="b" style="left:1785px;top:1040px;width:56px;height:47px;border-radius:4px"><svg class="p" style="left:12.0px;top:7.5px" width="32" height="32" viewBox="0 0 32 32"><g fill="#fff"><path d="M13.200 2h5.800v8.100h5.300L16 18.800 7.700 10.100h5.500z"/><path d="M4.500 18h6.700l4.800 4.800 4.800-4.800h7a1.500 1.500 0 0 1 1.500 1.500v4.900a1.500 1.500 0 0 1-1.500 1.500H4.500A1.500 1.500 0 0 1 3 24.400v-4.900A1.500 1.500 0 0 1 4.500 18z"/></g><g fill="#757575"><rect x="20.800" y="21.600" width="2.400" height="1.700" rx=".4"/><rect x="25.200" y="21.600" width="2.400" height="1.700" rx=".4"/></g></svg><div class="st" style="left:12.0px;top:7.5px;width:32px;height:32px"></div></div>
<div class="b" style="left:1845px;top:1040px;width:56px;height:47px;border-radius:4px"><svg class="p" style="left:12.0px;top:7.5px" width="32" height="32" viewBox="0 0 32 32"><rect x="0" y="6.200" width="32.300" height="19.700" rx="9.850" fill="#fff"/><circle cx="22.200" cy="16" r="8" fill="#757575"/></svg></div>
<svg class="p" style="left:1900px;top:1070px" width="20" height="19" fill="#6a6a6a"><circle cx="16" cy="4.5" r="1.9"/><circle cx="10.5" cy="10" r="1.9"/><circle cx="16" cy="10" r="1.9"/><circle cx="5" cy="15.299999999999955" r="1.9"/><circle cx="10.5" cy="15.299999999999955" r="1.9"/><circle cx="16" cy="15.299999999999955" r="1.9"/></svg>
<svg class="p" style="left:771px;top:213px" width="1151" height="735" viewBox="771 213 1151 735" font-family='"DejaVu Sans Mono","Liberation Mono",monospace' font-size="20" fill="#fff">
<rect x="771" y="213" width="1151" height="735" fill="#000"/>
<text x="1347" y="235" text-anchor="middle">eyediagram(generate_jitter_y_accurate.csv) |&#160;&#160;6 Jul 2025</text>
<g stroke="#fff" stroke-width="1" stroke-dasharray="3 3" shape-rendering="crispEdges" fill="none">
<path d="M921.500 255.5H1871"/>
<path d="M921.500 362.5H1871"/>
<path d="M921.500 469.5H1871"/>
<path d="M921.500 575.5H1871"/>
<path d="M921.500 682.5H1871"/>
<path d="M921.500 789.5H1871"/>
<path d="M1156.5 255.500V896"/>
<path d="M1394.5 255.500V896"/>
<path d="M1632.5 255.500V896"/>
<path d="M1870.5 255.500V896"/>
</g>
<g stroke="#fff" stroke-width="1" shape-rendering="crispEdges" fill="none">
<path d="M918.500 256V897M918 896.500H1868"/>
<path d="M916 276.5h2M916 298.5h2M916 319.5h2M916 340.5h2M916 362.5h2M916 383.5h2M916 405.5h2M916 426.5h2M916 447.5h2M916 469.5h2M916 490.5h2M916 511.5h2M916 533.5h2M916 554.5h2M916 576.5h2M916 597.5h2M916 618.5h2M916 640.5h2M916 661.5h2M916 682.5h2M916 704.5h2M916 725.5h2M916 746.5h2M916 768.5h2M916 789.5h2M916 811.5h2M916 832.5h2M916 853.5h2M916 875.5h2M918.5 897v2M966.5 897v2M1013.5 897v2M1061.5 897v2M1108.5 897v2M1156.5 897v2M1204.5 897v2M1251.5 897v2M1299.5 897v2M1346.5 897v2M1394.5 897v2M1442.5 897v2M1489.5 897v2M1537.5 897v2M1584.5 897v2M1632.5 897v2M1680.5 897v2M1727.5 897v2M1775.5 897v2M1822.5 897v2"/>
</g>
<path d="M918.500 255l4.500 9.500h-9z" fill="#fff"/><path d="M1871 896.500l-9.500 4.500v-9z" fill="#fff"/>
<text x="912.500" y="262.5" text-anchor="end">1.50</text>
<text x="912.500" y="369.3" text-anchor="end">1.00</text>
<text x="912.500" y="476.2" text-anchor="end">0.50</text>
<text x="912.500" y="583.0" text-anchor="end">0.0</text>
<text x="912.500" y="689.8" text-anchor="end">-0.50</text>
<text x="912.500" y="796.7" text-anchor="end">-1.00</text>
<text x="912.500" y="903.5" text-anchor="end">-1.50</text>
<text x="918.5" y="920" text-anchor="middle">0.0</text>
<text x="1156.5" y="920" text-anchor="middle">2.5e-005</text>
<text x="1394.5" y="920" text-anchor="middle">5e-005</text>
<text x="1632.5" y="920" text-anchor="middle">7.5e-005</text>
<text x="1870.5" y="920" text-anchor="middle">0.0001</text>
<text x="1393.500" y="940" text-anchor="middle">x , unit : s</text>
<text transform="translate(806 575.800) rotate(-90)" text-anchor="middle">y&lt;0&gt; and others , unit : V</text>
<polyline points="918.5,575.6 937.5,551.7 956.6,528.8 975.6,504.6 994.7,482.5 1013.7,462.5 1032.7,443.6 1051.8,425.6 1070.8,410.6 1089.9,397.6 1108.9,388.5 1127.9,381.5 1147.0,377.6 1166.0,377.6 1185.1,379.4 1204.1,382.5 1223.1,392.4 1242.2,402.8 1261.2,417.6 1280.3,433.4 1299.3,452.9 1318.3,473.7 1337.4,498.4 1356.4,522.8 1375.5,549.6 1394.5,575.6 1413.5,602.9 1432.6,629.6 1451.6,656.2 1470.7,681.6 1489.7,705.5 1508.7,728.4 1527.8,749.7 1546.8,766.6 1565.9,782.2 1584.9,792.1 1603.9,801.7 1623.0,804.3 1642.0,805.1 1661.1,803.5 1680.1,797.0 1699.1,786.1 1718.2,773.6 1737.2,756.2 1756.3,736.7 1775.3,714.6 1794.3,688.1 1813.4,662.7 1832.4,634.6 1851.5,605.5" fill="none" stroke="#bebebe" stroke-width="1.2" stroke-linejoin="round"/>
<polyline points="918.5,575.6 937.5,546.2 956.6,517.6 975.6,489.0 994.7,463.0 1013.7,438.6 1032.7,416.3 1051.8,396.3 1070.8,379.4 1089.9,366.4 1108.9,356.0 1127.9,350.3 1147.0,347.7 1166.0,348.2 1185.1,353.4 1204.1,360.7 1223.1,372.4 1242.2,387.7 1261.2,404.6 1280.3,424.3 1299.3,446.4 1318.3,471.6 1337.4,496.3 1356.4,522.3 1375.5,549.6 1394.5,575.6 1413.5,602.9 1432.6,628.9 1451.6,652.3 1470.7,674.9 1489.7,697.0 1508.7,715.9 1527.8,733.3 1546.8,746.3 1565.9,758.3 1584.9,765.3 1603.9,772.6 1623.0,774.4 1642.0,772.6 1661.1,769.2 1680.1,762.2 1699.1,752.3 1718.2,740.1 1737.2,725.0 1756.3,708.1 1775.3,689.2 1794.3,668.4 1813.4,646.3 1832.4,623.1 1851.5,600.3" fill="none" stroke="#87ceeb" stroke-width="1.2" stroke-linejoin="round"/>
<polyline points="918.5,575.6 937.5,551.7 956.6,528.8 975.6,504.4 994.7,484.0 1013.7,462.2 1032.7,441.7 1051.8,427.0 1070.8,405.2 1089.9,390.1 1108.9,385.4 1127.9,369.9 1147.0,373.2 1166.0,361.8 1185.1,374.6 1204.1,381.4 1223.1,388.1 1242.2,389.5 1261.2,408.4 1280.3,434.4 1299.3,454.0 1318.3,471.1 1337.4,497.3 1356.4,522.8 1375.5,549.6 1394.5,575.6 1413.5,603.6 1432.6,629.2 1451.6,656.3 1470.7,681.3 1489.7,705.9 1508.7,729.4 1527.8,749.2 1546.8,765.6 1565.9,781.6 1584.9,795.3 1603.9,806.2 1623.0,808.8 1642.0,807.7 1661.1,805.1 1680.1,797.7 1699.1,786.3 1718.2,773.7 1737.2,756.2 1756.3,736.7 1775.3,714.6 1794.3,688.1 1813.4,662.7 1832.4,634.6 1851.5,605.5" fill="none" stroke="#ff0000" stroke-width="2" stroke-linejoin="round" shape-rendering="crispEdges"/>
<polyline points="918.5,575.6 937.5,551.7 956.6,528.8 975.6,504.7 994.7,483.0 1013.7,461.7 1032.7,443.9 1051.8,425.9 1070.8,406.9 1089.9,393.7 1108.9,386.8 1127.9,381.4 1147.0,369.2 1166.0,365.8 1185.1,369.2 1204.1,376.6 1223.1,385.4 1242.2,403.3 1261.2,419.1 1280.3,433.5 1299.3,452.7 1318.3,472.9 1337.4,498.2 1356.4,522.8 1375.5,549.6 1394.5,575.6 1413.5,601.0 1432.6,627.9 1451.6,654.1 1470.7,683.2 1489.7,706.0 1508.7,728.1 1527.8,751.9 1546.8,765.8 1565.9,784.0 1584.9,794.9 1603.9,801.9 1623.0,805.0 1642.0,807.7 1661.1,805.1 1680.1,797.7 1699.1,786.3 1718.2,773.7 1737.2,756.2 1756.3,736.7 1775.3,714.6 1794.3,688.1 1813.4,662.7 1832.4,634.6 1851.5,605.5" fill="none" stroke="#cd5c5c" stroke-width="2" stroke-linejoin="round" shape-rendering="crispEdges"/>
<polyline points="918.5,575.6 937.5,551.7 956.6,528.8 975.6,504.9 994.7,485.3 1013.7,462.8 1032.7,442.6 1051.8,422.4 1070.8,417.6 1089.9,398.5 1108.9,386.1 1127.9,377.3 1147.0,372.6 1166.0,371.9 1185.1,375.3 1204.1,382.7 1223.1,390.8 1242.2,392.1 1261.2,417.4 1280.3,431.4 1299.3,453.7 1318.3,470.9 1337.4,497.2 1356.4,522.8 1375.5,549.6 1394.5,575.6 1413.5,600.6 1432.6,630.9 1451.6,657.5 1470.7,680.1 1489.7,704.5 1508.7,727.4 1527.8,748.0 1546.8,765.8 1565.9,784.8 1584.9,794.7 1603.9,807.3 1623.0,807.2 1642.0,807.7 1661.1,805.1 1680.1,797.7 1699.1,786.3 1718.2,773.7 1737.2,756.2 1756.3,736.7 1775.3,714.6 1794.3,688.1 1813.4,662.7 1832.4,634.6 1851.5,605.5" fill="none" stroke="#ffa500" stroke-width="2" stroke-linejoin="round" shape-rendering="crispEdges"/>
<polyline points="918.5,575.6 937.5,551.7 956.6,528.8 975.6,503.8 994.7,483.8 1013.7,462.3 1032.7,445.2 1051.8,426.4 1070.8,400.9 1089.9,393.5 1108.9,384.1 1127.9,361.8 1147.0,366.5 1166.0,355.7 1185.1,375.9 1204.1,373.5 1223.1,390.8 1242.2,393.5 1261.2,407.0 1280.3,419.9 1299.3,451.6 1318.3,473.2 1337.4,499.2 1356.4,522.8 1375.5,549.6 1394.5,575.6 1413.5,604.1 1432.6,630.6 1451.6,656.5 1470.7,682.8 1489.7,708.2 1508.7,727.9 1527.8,748.7 1546.8,769.8 1565.9,783.3 1584.9,795.1 1603.9,805.6 1623.0,805.6 1642.0,807.7 1661.1,805.1 1680.1,797.7 1699.1,786.3 1718.2,773.7 1737.2,756.2 1756.3,736.7 1775.3,714.6 1794.3,688.1 1813.4,662.7 1832.4,634.6 1851.5,605.5" fill="none" stroke="#bebebe" stroke-width="2" stroke-linejoin="round" shape-rendering="crispEdges"/>
<polyline points="918.5,575.6 937.5,546.2 956.6,517.6 975.6,488.6 994.7,460.8 1013.7,438.1 1032.7,415.1 1051.8,398.9 1070.8,386.8 1089.9,371.9 1108.9,366.5 1127.9,357.0 1147.0,355.7 1166.0,353.6 1185.1,355.0 1204.1,367.8 1223.1,381.4 1242.2,386.0 1261.2,404.8 1280.3,423.5 1299.3,445.2 1318.3,473.6 1337.4,496.8 1356.4,522.3 1375.5,549.6 1394.5,575.6 1413.5,604.1 1432.6,626.9 1451.6,653.8 1470.7,673.9 1489.7,696.7 1508.7,714.0 1527.8,731.1 1546.8,744.9 1565.9,754.2 1584.9,764.4 1603.9,768.9 1623.0,771.3 1642.0,771.7 1661.1,768.7 1680.1,762.0 1699.1,752.2 1718.2,740.1 1737.2,725.0 1756.3,708.1 1775.3,689.2 1794.3,668.4 1813.4,646.3 1832.4,623.1 1851.5,600.3" fill="none" stroke="#008000" stroke-width="2" stroke-linejoin="round" shape-rendering="crispEdges"/>
<polyline points="918.5,575.6 937.5,546.2 956.6,517.6 975.6,487.1 994.7,463.0 1013.7,438.8 1032.7,415.7 1051.8,398.2 1070.8,384.1 1089.9,367.2 1108.9,355.7 1127.9,355.0 1147.0,349.6 1166.0,354.3 1185.1,360.4 1204.1,361.1 1223.1,375.9 1242.2,392.2 1261.2,405.6 1280.3,421.6 1299.3,447.3 1318.3,470.7 1337.4,495.3 1356.4,522.3 1375.5,549.6 1394.5,575.6 1413.5,604.4 1432.6,626.3 1451.6,651.2 1470.7,670.9 1489.7,695.9 1508.7,715.1 1527.8,729.6 1546.8,743.4 1565.9,755.1 1584.9,763.6 1603.9,768.8 1623.0,771.5 1642.0,771.7 1661.1,768.7 1680.1,762.0 1699.1,752.2 1718.2,740.1 1737.2,725.0 1756.3,708.1 1775.3,689.2 1794.3,668.4 1813.4,646.3 1832.4,623.1 1851.5,600.3" fill="none" stroke="#ff00ff" stroke-width="2" stroke-linejoin="round" shape-rendering="crispEdges"/>
<polyline points="918.5,575.6 937.5,546.2 956.6,517.6 975.6,488.6 994.7,460.7 1013.7,437.4 1032.7,416.6 1051.8,397.0 1070.8,387.1 1089.9,361.4 1108.9,356.0 1127.9,353.5 1147.0,346.9 1166.0,336.4 1185.1,357.4 1204.1,372.3 1223.1,377.4 1242.2,383.1 1261.2,404.1 1280.3,424.6 1299.3,449.6 1318.3,472.4 1337.4,496.4 1356.4,522.3 1375.5,549.6 1394.5,575.6 1413.5,601.9 1432.6,628.1 1451.6,653.2 1470.7,676.6 1489.7,697.0 1508.7,714.7 1527.8,728.0 1546.8,742.0 1565.9,753.9 1584.9,761.3 1603.9,771.0 1623.0,772.2 1642.0,771.7 1661.1,768.7 1680.1,762.0 1699.1,752.2 1718.2,740.1 1737.2,725.0 1756.3,708.1 1775.3,689.2 1794.3,668.4 1813.4,646.3 1832.4,623.1 1851.5,600.3" fill="none" stroke="#000000" stroke-width="2" stroke-linejoin="round" shape-rendering="crispEdges"/>
<polyline points="918.5,575.6 937.5,546.2 956.6,517.6 975.6,488.3 994.7,461.3 1013.7,438.5 1032.7,416.9 1051.8,397.7 1070.8,388.1 1089.9,373.2 1108.9,369.9 1127.9,354.3 1147.0,353.6 1166.0,359.1 1185.1,362.4 1204.1,365.1 1223.1,382.7 1242.2,400.3 1261.2,403.6 1280.3,422.8 1299.3,446.5 1318.3,471.8 1337.4,495.9 1356.4,522.3 1375.5,549.6 1394.5,575.6 1413.5,604.5 1432.6,629.2 1451.6,649.4 1470.7,675.5 1489.7,693.9 1508.7,714.0 1527.8,728.6 1546.8,743.1 1565.9,753.6 1584.9,762.4 1603.9,775.0 1623.0,772.6 1642.0,771.7 1661.1,768.7 1680.1,762.0 1699.1,752.2 1718.2,740.1 1737.2,725.0 1756.3,708.1 1775.3,689.2 1794.3,668.4 1813.4,646.3 1832.4,623.1 1851.5,600.3" fill="none" stroke="#87ceeb" stroke-width="2" stroke-linejoin="round" shape-rendering="crispEdges"/>
<g fill="#87ceeb" stroke="#fff" stroke-width="1"><circle cx="918.5" cy="575.6" r="2.800"/><circle cx="937.5" cy="546.2" r="2.800"/><circle cx="956.6" cy="517.6" r="2.800"/><circle cx="975.6" cy="489.0" r="2.800"/><circle cx="994.7" cy="463.0" r="2.800"/><circle cx="1013.7" cy="438.6" r="2.800"/><circle cx="1032.7" cy="416.3" r="2.800"/><circle cx="1051.8" cy="396.3" r="2.800"/><circle cx="1070.8" cy="379.4" r="2.800"/><circle cx="1089.9" cy="366.4" r="2.800"/><circle cx="1108.9" cy="356.0" r="2.800"/><circle cx="1127.9" cy="350.3" r="2.800"/><circle cx="1147.0" cy="347.7" r="2.800"/><circle cx="1166.0" cy="348.2" r="2.800"/><circle cx="1185.1" cy="353.4" r="2.800"/><circle cx="1204.1" cy="360.7" r="2.800"/><circle cx="1223.1" cy="372.4" r="2.800"/><circle cx="1242.2" cy="387.7" r="2.800"/><circle cx="1261.2" cy="404.6" r="2.800"/><circle cx="1280.3" cy="424.3" r="2.800"/><circle cx="1299.3" cy="446.4" r="2.800"/><circle cx="1318.3" cy="471.6" r="2.800"/><circle cx="1337.4" cy="496.3" r="2.800"/><circle cx="1356.4" cy="522.3" r="2.800"/><circle cx="1375.5" cy="549.6" r="2.800"/><circle cx="1394.5" cy="575.6" r="2.800"/><circle cx="1413.5" cy="602.9" r="2.800"/><circle cx="1432.6" cy="628.9" r="2.800"/><circle cx="1451.6" cy="652.3" r="2.800"/><circle cx="1470.7" cy="674.9" r="2.800"/><circle cx="1489.7" cy="697.0" r="2.800"/><circle cx="1508.7" cy="715.9" r="2.800"/><circle cx="1527.8" cy="733.3" r="2.800"/><circle cx="1546.8" cy="746.3" r="2.800"/><circle cx="1565.9" cy="758.3" r="2.800"/><circle cx="1584.9" cy="765.3" r="2.800"/><circle cx="1603.9" cy="772.6" r="2.800"/><circle cx="1623.0" cy="774.4" r="2.800"/><circle cx="1642.0" cy="772.6" r="2.800"/><circle cx="1661.1" cy="769.2" r="2.800"/><circle cx="1680.1" cy="762.2" r="2.800"/><circle cx="1699.1" cy="752.3" r="2.800"/><circle cx="1718.2" cy="740.1" r="2.800"/><circle cx="1737.2" cy="725.0" r="2.800"/><circle cx="1756.3" cy="708.1" r="2.800"/><circle cx="1775.3" cy="689.2" r="2.800"/><circle cx="1794.3" cy="668.4" r="2.800"/><circle cx="1813.4" cy="646.3" r="2.800"/><circle cx="1832.4" cy="623.1" r="2.800"/><circle cx="1851.5" cy="600.3" r="2.800"/></g>
<g fill="#bebebe" stroke="#fff" stroke-width="1"><circle cx="918.5" cy="575.6" r="2.800"/><circle cx="937.5" cy="551.7" r="2.800"/><circle cx="956.6" cy="528.8" r="2.800"/><circle cx="975.6" cy="504.6" r="2.800"/><circle cx="994.7" cy="482.5" r="2.800"/><circle cx="1013.7" cy="462.5" r="2.800"/><circle cx="1032.7" cy="443.6" r="2.800"/><circle cx="1051.8" cy="425.6" r="2.800"/><circle cx="1070.8" cy="410.6" r="2.800"/><circle cx="1089.9" cy="397.6" r="2.800"/><circle cx="1108.9" cy="388.5" r="2.800"/><circle cx="1127.9" cy="381.5" r="2.800"/><circle cx="1147.0" cy="377.6" r="2.800"/><circle cx="1166.0" cy="377.6" r="2.800"/><circle cx="1185.1" cy="379.4" r="2.800"/><circle cx="1204.1" cy="382.5" r="2.800"/><circle cx="1223.1" cy="392.4" r="2.800"/><circle cx="1242.2" cy="402.8" r="2.800"/><circle cx="1261.2" cy="417.6" r="2.800"/><circle cx="1280.3" cy="433.4" r="2.800"/><circle cx="1299.3" cy="452.9" r="2.800"/><circle cx="1318.3" cy="473.7" r="2.800"/><circle cx="1337.4" cy="498.4" r="2.800"/><circle cx="1356.4" cy="522.8" r="2.800"/><circle cx="1375.5" cy="549.6" r="2.800"/><circle cx="1394.5" cy="575.6" r="2.800"/><circle cx="1413.5" cy="602.9" r="2.800"/><circle cx="1432.6" cy="629.6" r="2.800"/><circle cx="1451.6" cy="656.2" r="2.800"/><circle cx="1470.7" cy="681.6" r="2.800"/><circle cx="1489.7" cy="705.5" r="2.800"/><circle cx="1508.7" cy="728.4" r="2.800"/><circle cx="1527.8" cy="749.7" r="2.800"/><circle cx="1546.8" cy="766.6" r="2.800"/><circle cx="1565.9" cy="782.2" r="2.800"/><circle cx="1584.9" cy="792.1" r="2.800"/><circle cx="1603.9" cy="801.7" r="2.800"/><circle cx="1623.0" cy="804.3" r="2.800"/><circle cx="1642.0" cy="805.1" r="2.800"/><circle cx="1661.1" cy="803.5" r="2.800"/><circle cx="1680.1" cy="797.0" r="2.800"/><circle cx="1699.1" cy="786.1" r="2.800"/><circle cx="1718.2" cy="773.6" r="2.800"/><circle cx="1737.2" cy="756.2" r="2.800"/><circle cx="1756.3" cy="736.7" r="2.800"/><circle cx="1775.3" cy="714.6" r="2.800"/><circle cx="1794.3" cy="688.1" r="2.800"/><circle cx="1813.4" cy="662.7" r="2.800"/><circle cx="1832.4" cy="634.6" r="2.800"/><circle cx="1851.5" cy="605.5" r="2.800"/></g>
<rect x="1781.500" y="265.500" width="79" height="244" fill="#000" stroke="#fff" stroke-width="1" shape-rendering="crispEdges"/>
<rect x="1785" y="277.2" width="14" height="5" fill="#87ceeb"/>
<text x="1809" y="286.2">y&lt;0&gt;</text>
<rect x="1785" y="301.2" width="14" height="5" fill="#bebebe"/>
<text x="1809" y="310.2">y&lt;1&gt;</text>
<rect x="1785" y="325.2" width="14" height="5" fill="#000000"/>
<text x="1809" y="334.2">y&lt;2&gt;</text>
<rect x="1785" y="349.2" width="14" height="5" fill="#ffa500"/>
<text x="1809" y="358.2">y&lt;3&gt;</text>
<rect x="1785" y="373.2" width="14" height="5" fill="#ff00ff"/>
<text x="1809" y="382.2">y&lt;4&gt;</text>
<rect x="1785" y="397.2" width="14" height="5" fill="#cd5c5c"/>
<text x="1809" y="406.2">y&lt;5&gt;</text>
<rect x="1785" y="421.2" width="14" height="5" fill="#008000"/>
<text x="1809" y="430.2">y&lt;6&gt;</text>
<rect x="1785" y="445.2" width="14" height="5" fill="#ff0000"/>
<text x="1809" y="454.2">y&lt;7&gt;</text>
<rect x="1785" y="469.2" width="14" height="5" fill="#87ceeb"/>
<text x="1809" y="478.2">y&lt;8&gt;</text>
<rect x="1785" y="493.2" width="14" height="5" fill="#bebebe"/>
<text x="1809" y="502.2">y&lt;9&gt;</text>
</svg>
</div></body></html>
